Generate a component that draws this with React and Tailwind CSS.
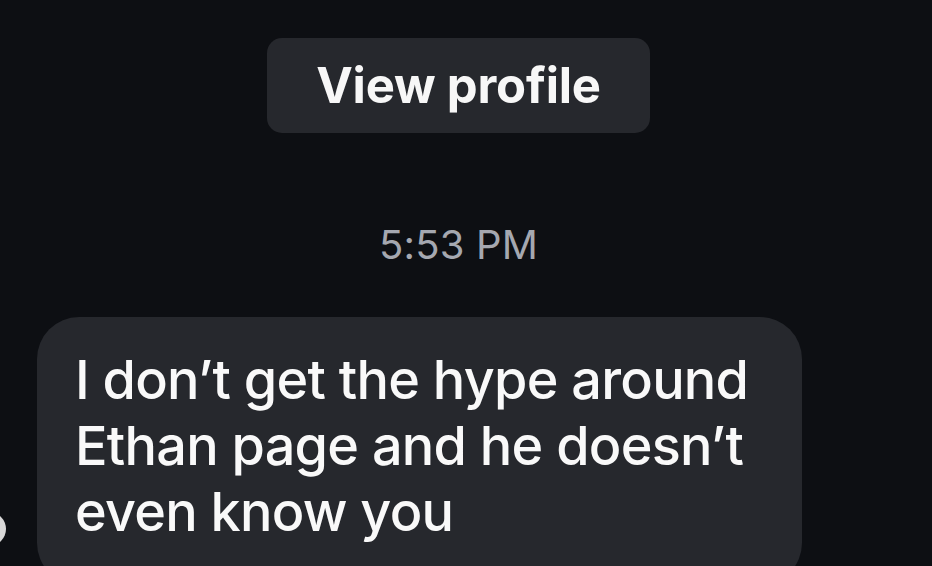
import React from 'react';

const App = () => {
  return (
    <div className="relative h-[566px] w-[932px] overflow-hidden bg-[#0d0f13] font-['Inter',sans-serif] text-white">
      {/* profile button */}
      <div className="flex justify-center pt-[38px] pr-[15px]">
        <button className="flex h-[95px] w-[383px] items-center justify-center rounded-[15px] bg-[#26282d] text-[49px] font-bold tracking-[-0.2px] text-[#f7f7f7]">
          View profile
        </button>
      </div>

      <div className="mt-[90px] pr-[15px] text-center text-[40px] leading-[44px] tracking-[0.2px] text-[#a5a8b0]">
        5:53 PM
      </div>

      <div className="mt-[50px] flex">
        <div className="ml-[37px] w-[765px] rounded-[42px] bg-[#26282d] px-[38px] pt-[30px] pb-[40px] text-[54px] font-medium leading-[66px] tracking-[-0.75px] text-[#f9f9f9]">
          I don’t get the hype around Ethan page and he doesn’t even know you
        </div>
      </div>

      {/* avatar edge */}
      <div className="absolute -left-[28px] top-[512px] h-[34px] w-[34px] rounded-full bg-[#d8d8d8]" />
    </div>
  );
};

export default App;
